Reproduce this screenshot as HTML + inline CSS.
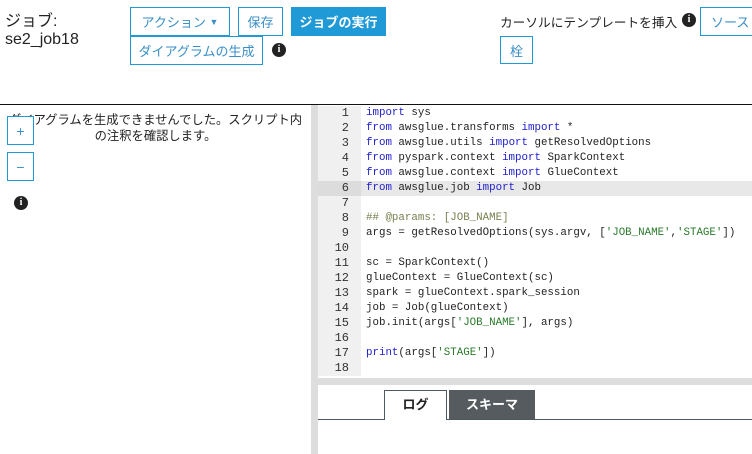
<!DOCTYPE html>
<html><head><meta charset="utf-8"><style>
*{margin:0;padding:0;box-sizing:border-box}
body{width:752px;height:454px;overflow:hidden;background:#fff;position:relative;font-family:"Liberation Sans","Noto Sans CJK JP",sans-serif;color:#222}
.a{position:absolute}
.btn{position:absolute;border:1px solid #1f9ad6;color:#3a8fc8;font-size:13px;display:flex;align-items:center;justify-content:center;background:#fff}
.info{position:absolute;width:14px;height:14px;border-radius:50%;background:#222;color:#fff;font:bold 10px "Liberation Serif",serif;text-align:center;line-height:14px}
.code{position:absolute;left:318px;top:106px;width:434px;font-family:"Liberation Mono",monospace;font-size:10.8px}
.ln{height:15px;line-height:15px;white-space:pre;display:flex;font-size:10.8px}
.g{width:43px;flex-shrink:0;background:#f0f0f0;text-align:right;padding-right:12px;color:#333;font-size:12px}
.t{padding-left:5px;flex:1;overflow:hidden;font-size:10.8px}
.hl{background:#e8e8e8}.hl .g{background:#dcdcdc}
.k{color:#2020d0}.s{color:#2a7a2a}.c{color:#7a8050}
</style></head><body>
<div class="a" style="left:5px;top:13px;font-size:16px;line-height:18px">ジョブ:<br>se2_job18</div>
<div class="btn" style="left:130px;top:7px;width:100px;height:29px">アクション&nbsp;<span style="font-size:9px">▼</span></div>
<div class="btn" style="left:238px;top:7px;width:45px;height:29px">保存</div>
<div class="btn" style="left:291px;top:7px;width:95px;height:29px;background:#1f9ad6;color:#fff;font-weight:bold">ジョブの実行</div>
<div class="btn" style="left:130px;top:36px;width:133px;height:29px">ダイアグラムの生成</div>
<div class="info" style="left:272px;top:43px">i</div>
<div class="a" style="left:500px;top:12px;font-size:12.7px">カーソルにテンプレートを挿入</div>
<div class="info" style="left:682px;top:13px">i</div>
<div class="btn" style="left:700px;top:7px;width:60px;height:29px;justify-content:flex-start;padding-left:10px">ソース</div>
<div class="btn" style="left:500px;top:36px;width:33px;height:28px">栓</div>
<div class="a" style="left:0;top:104px;width:752px;height:1px;background:#111"></div>
<div class="a" style="left:0;top:112px;width:311px;text-align:center;font-size:12.3px;line-height:16px">ダイアグラムを生成できませんでした。スクリプト内<br>の注釈を確認します。</div>
<div class="btn" style="left:7px;top:116px;width:27px;height:29px;font-size:14px">+</div>
<div class="btn" style="left:7px;top:152px;width:27px;height:29px;font-size:14px">−</div>
<div class="info" style="left:14px;top:196px">i</div>
<div class="a" style="left:311px;top:105px;width:7px;height:349px;background:#ddd"></div>
<div class="code">
<div class="ln"><span class="g">1</span><span class="t"><span class="k">import</span> sys</span></div>
<div class="ln"><span class="g">2</span><span class="t"><span class="k">from</span> awsglue.transforms <span class="k">import</span> *</span></div>
<div class="ln"><span class="g">3</span><span class="t"><span class="k">from</span> awsglue.utils <span class="k">import</span> getResolvedOptions</span></div>
<div class="ln"><span class="g">4</span><span class="t"><span class="k">from</span> pyspark.context <span class="k">import</span> SparkContext</span></div>
<div class="ln"><span class="g">5</span><span class="t"><span class="k">from</span> awsglue.context <span class="k">import</span> GlueContext</span></div>
<div class="ln hl"><span class="g">6</span><span class="t"><span class="k">from</span> awsglue.job <span class="k">import</span> Job</span></div>
<div class="ln"><span class="g">7</span><span class="t"></span></div>
<div class="ln"><span class="g">8</span><span class="t c">## @params: [JOB_NAME]</span></div>
<div class="ln"><span class="g">9</span><span class="t">args = getResolvedOptions(sys.argv, [<span class="s">'JOB_NAME'</span>,<span class="s">'STAGE'</span>])</span></div>
<div class="ln"><span class="g">10</span><span class="t"></span></div>
<div class="ln"><span class="g">11</span><span class="t">sc = SparkContext()</span></div>
<div class="ln"><span class="g">12</span><span class="t">glueContext = GlueContext(sc)</span></div>
<div class="ln"><span class="g">13</span><span class="t">spark = glueContext.spark_session</span></div>
<div class="ln"><span class="g">14</span><span class="t">job = Job(glueContext)</span></div>
<div class="ln"><span class="g">15</span><span class="t">job.init(args[<span class="s">'JOB_NAME'</span>], args)</span></div>
<div class="ln"><span class="g">16</span><span class="t"></span></div>
<div class="ln"><span class="g">17</span><span class="t"><span class="k">print</span>(args[<span class="s">'STAGE'</span>])</span></div>
<div class="ln"><span class="g">18</span><span class="t"></span></div>
</div>
<div class="a" style="left:318px;top:378px;width:434px;height:7px;background:#ddd"></div>
<div class="a" style="left:318px;top:419px;width:434px;height:1px;background:#4a5a60"></div>
<div class="a" style="left:384px;top:390px;width:63px;height:30px;border:1px solid #4a5a60;border-bottom:none;background:#fff;font-weight:bold;font-size:13px;text-align:center;line-height:28px">ログ</div>
<div class="a" style="left:449px;top:390px;width:86px;height:29px;background:#555b5e;color:#fff;font-weight:bold;font-size:13px;text-align:center;line-height:29px">スキーマ</div>
</body></html>
